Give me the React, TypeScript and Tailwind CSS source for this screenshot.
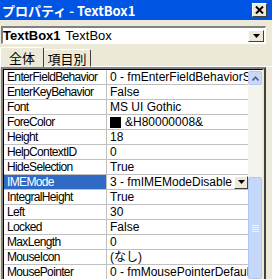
import React from "react";

const rows: { name: string; value: React.ReactNode; selected?: boolean }[] = [
  { name: "EnterFieldBehavior", value: "0 - fmEnterFieldBehaviorSelectAll" },
  { name: "EnterKeyBehavior", value: "False" },
  { name: "Font", value: "MS UI Gothic" },
  {
    name: "ForeColor",
    value: (
      <span className="flex items-center">
        <span className="inline-block w-[11px] h-[11px] bg-black mr-[4px]" />
        &amp;H80000008&amp;
      </span>
    ),
  },
  { name: "Height", value: "18" },
  { name: "HelpContextID", value: "0" },
  { name: "HideSelection", value: "True" },
  { name: "IMEMode", value: "3 - fmIMEModeDisable", selected: true },
  { name: "IntegralHeight", value: "True" },
  { name: "Left", value: "30" },
  { name: "Locked", value: "False" },
  { name: "MaxLength", value: "0" },
  { name: "MouseIcon", value: "(なし)" },
  { name: "MousePointer", value: "0 - fmMousePointerDefault" },
];

function DownArrow() {
  return (
    <svg width="7" height="4" viewBox="0 0 7 4">
      <path d="M0 0H7L3.5 4Z" fill="#000" />
    </svg>
  );
}

export default function App() {
  return (
    <div
      className="w-[272px] h-[279px] bg-[#ECE9D8] overflow-hidden flex flex-col text-[12px] leading-none text-black"
      style={{ fontFamily: '"Liberation Sans", "Noto Sans CJK JP", sans-serif' }}
    >
      {/* Title bar */}
      <div className="h-[20px] shrink-0 bg-[#0054E3] flex items-center justify-between pl-[2px] pr-[5px]">
        <span
          className="text-white font-bold text-[13px]"
          style={{ fontFamily: '"Noto Sans CJK JP", sans-serif' }}
        >
          プロパティ - TextBox1
        </span>
        <div className="w-[15px] h-[14px] bg-[#ECE9D8] border-t border-l border-white border-r border-b border-r-[#404040] border-b-[#404040] flex items-center justify-center">
          <svg width="9" height="8" viewBox="0 0 9 8">
            <path d="M1 0.5L8 7.5M8 0.5L1 7.5" stroke="#000" strokeWidth="2" />
          </svg>
        </div>
      </div>

      {/* Combo */}
      <div className="mt-[6px] mx-[1px] mr-[6px] h-[18px] shrink-0 bg-white border-t-2 border-l-2 border-t-[#808080] border-l-[#808080] border-b border-r border-b-white border-r-white flex items-center">
        <span className="pl-[0px] flex-1 text-[13px]">
          <span className="font-bold">TextBox1</span>
          <span className="ml-[5px]">TextBox</span>
        </span>
        <div className="w-[16px] h-[12px] mr-[1px] bg-[#ECE9D8] border border-white border-r-[#404040] border-b-[#404040] flex items-center justify-center">
          <DownArrow />
        </div>
      </div>

      {/* Tabs */}
      <div className="mt-[3px] h-[20px] shrink-0 flex items-end">
        <div
          className="h-[20px] w-[44px] border-t border-l border-r border-t-white border-l-white border-r-[#404040] rounded-t-[2px] flex items-center justify-center text-[13px]"
          style={{ fontFamily: '"Noto Sans CJK JP", sans-serif' }}
        >
          全体
        </div>
        <div
          className="h-[18px] w-[47px] border-t border-r border-t-white border-r-[#404040] rounded-t-[2px] flex items-center justify-center text-[13px] border-b border-b-white"
          style={{ fontFamily: '"Noto Sans CJK JP", sans-serif' }}
        >
          項目別
        </div>
        <div className="flex-1 border-b border-b-white h-[1px]" />
      </div>

      {/* Grid */}
      <div className="flex-1 min-h-0 ml-[1px] mr-[6px] border-t-2 border-l-2 border-t-[#808080] border-l-[#808080] border-r-2 border-r-[#404040] flex">
        <div className="flex-1 min-w-0 border-t border-l border-black border-r-2 border-r-[#ECE9D8] bg-white flex">
          <div className="flex-1 min-w-0 flex flex-col">
            {rows.map((r) => (
              <div key={r.name} className="h-[15px] shrink-0 flex border-b border-[#C0C0C0]">
                <div
                  className={
                    "w-[103px] shrink-0 border-r border-[#C0C0C0] pl-[3px] flex items-center whitespace-nowrap overflow-hidden tracking-[-0.65px] " +
                    (r.selected ? "bg-[#316AC5] text-white" : "")
                  }
                >
                  {r.name}
                </div>
                <div className="flex-1 min-w-0 pl-[3px] flex items-center whitespace-nowrap overflow-hidden">
                  {r.value}
                  {r.selected && (
                    <div className="ml-auto w-[14px] h-[13px] shrink-0 bg-[#ECE9D8] border border-white border-r-[#404040] border-b-[#404040] flex items-center justify-center">
                      <DownArrow />
                    </div>
                  )}
                </div>
              </div>
            ))}
          </div>
          {/* Scrollbar */}
          <div className="w-[14px] shrink-0 bg-[#F4F3EE] flex flex-col">
            <div className="h-[14px] mt-[1px] rounded-[2px] bg-[#C8D8FA] border border-[#B4C8F6] flex items-center justify-center">
              <svg width="7" height="5" viewBox="0 0 7 5">
                <path d="M0.5 4.5L3.5 1.2L6.5 4.5" stroke="#4D6185" strokeWidth="1.6" fill="none" />
              </svg>
            </div>
            <div className="h-[92px]" />
            <div className="flex-1 rounded-[2px] bg-[#C6D7FC] border border-[#B0C6F5] flex items-center justify-center">
              <div className="flex flex-col gap-[1px]">
                <div className="w-[7px] h-[1px] bg-[#EEF4FE]" />
                <div className="w-[7px] h-[1px] bg-[#EEF4FE]" />
                <div className="w-[7px] h-[1px] bg-[#EEF4FE]" />
                <div className="w-[7px] h-[1px] bg-[#EEF4FE]" />
              </div>
            </div>
          </div>
        </div>
      </div>
    </div>
  );
}
